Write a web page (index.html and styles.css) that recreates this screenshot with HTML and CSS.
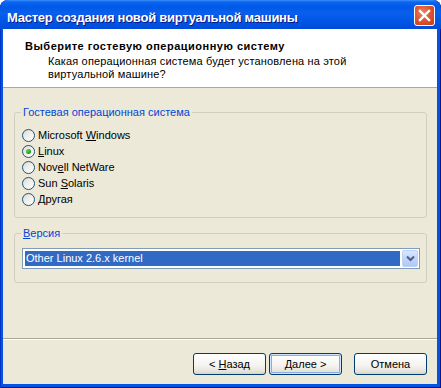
FILE: index.html
```html
<!DOCTYPE html>
<html lang="ru">
<head>
  <meta charset="UTF-8">
  <title>Мастер создания новой виртуальной машины</title>
  <link rel="stylesheet" href="styles.css">
</head>
<body>
  <div class="window">
    <!-- Title bar -->
    <div class="titlebar">
      <span class="title">Мастер создания новой виртуальной машины</span>
      <button class="close" title="Закрыть">
        <svg width="13" height="13" viewBox="0 0 13 13"><path d="M2 2 L11 11 M11 2 L2 11" stroke="#fff" stroke-width="2.4" stroke-linecap="square"/></svg>
      </button>
    </div>

    <div class="client">
      <!-- Wizard header -->
      <div class="header">
        <div class="header-title">Выберите гостевую операционную систему</div>
        <div class="header-sub">Какая операционная система будет установлена на этой<br>виртуальной машине?</div>
      </div>

      <div class="content">
        <fieldset class="group os-group">
          <legend>Гостевая операционная система</legend>
          <label class="radio-row"><span class="radio"></span><span>Microsoft <u>W</u>indows</span></label>
          <label class="radio-row"><span class="radio checked"></span><span><u>L</u>inux</span></label>
          <label class="radio-row"><span class="radio"></span><span>Nov<u>e</u>ll NetWare</span></label>
          <label class="radio-row"><span class="radio"></span><span>Sun <u>S</u>olaris</span></label>
          <label class="radio-row"><span class="radio"></span><span><u>Д</u>ругая</span></label>
        </fieldset>

        <fieldset class="group version-group">
          <legend><u>В</u>ерсия</legend>
          <div class="combo">
            <span class="combo-value">Other Linux 2.6.x kernel</span>
            <span class="combo-btn">
              <svg width="9" height="7" viewBox="0 0 9 7"><path d="M1 1.5 L4.5 5 L8 1.5" fill="none" stroke="#4D6185" stroke-width="2"/></svg>
            </span>
          </div>
        </fieldset>
      </div>

      <!-- Wizard buttons -->
      <div class="footer">
        <button class="btn">&lt; <u>Н</u>азад</button>
        <button class="btn default"><u>Д</u>алее &gt;</button>
        <button class="btn cancel">Отмена</button>
      </div>
    </div>
  </div>
</body>
</html>
```

FILE: styles.css
```css
/* --- Base --- */
*{box-sizing:border-box;margin:0;padding:0}
body{background:#fff;font-family:"Liberation Sans","DejaVu Sans",sans-serif;font-size:11px;color:#000}
u{text-decoration:underline;text-underline-offset:1px}

/* --- Window frame --- */
.window{width:441px;height:388px;display:flex;flex-direction:column;background:#0553E1;border-radius:8px 8px 0 0;overflow:hidden;box-shadow:inset 1px 0 #0034C4,inset -1px 0 #00138C,inset 0 -1px #00138C}
.titlebar{height:29px;flex:none;display:flex;align-items:flex-start;padding:0 6px 0 7px;background:linear-gradient(to bottom,#3D8FF9 0,#0A66F0 2px,#0058E8 7px,#0A60EC 13px,#0056E6 21px,#004BD8 29px);border-radius:8px 8px 0 0}
.title{flex:1;color:#fff;font-weight:700;font-size:13px;line-height:15px;margin-top:10px;letter-spacing:-.25px;text-shadow:1px 1px #0A1883;white-space:nowrap}
.close{width:21px;height:21px;margin-top:5px;border:1px solid #fff;border-radius:3px;background:radial-gradient(circle at 40% 35%,#E9866A 0,#DF5632 45%,#C33A18 100%);display:flex;align-items:center;justify-content:center;cursor:pointer}
.close svg{display:block}

/* --- Client area --- */
.client{flex:1;margin:0 4px 4px 3px;background:#ECE9D8;display:flex;flex-direction:column}
.header{height:59px;flex:none;background:#fff;border-bottom:1px solid #ACA899;padding:11px 0 0 22px}
.header-title{font-weight:700;line-height:13px;letter-spacing:.5px}
.header-sub{line-height:13px;margin:2px 0 0 23px;letter-spacing:.15px}

.content{flex:1;padding:18px 10px 0 11px}
.group{border:1px solid #D0D0BF;border-radius:3px;padding:8px 6px 10px 6px}
.group legend{color:#0046D5;padding:0 2px;line-height:13px}
.version-group{margin-top:9px;padding-bottom:13px}

/* --- Radios --- */
.radio-row{display:flex;align-items:center;height:16px;margin-left:1px;gap:3px;cursor:default}
.radio{position:relative;width:13px;height:13px;flex:none;border-radius:50%;border:1px solid #1C5180;background:linear-gradient(135deg,#DCDAD2 0,#F2F1EC 55%,#fff 100%)}
.radio.checked::after{content:"";position:absolute;left:3px;top:3px;width:5px;height:5px;border-radius:50%;background:radial-gradient(circle at 35% 35%,#5AD55A 0,#21A121 60%,#1A7F1A 100%)}

/* --- Combo box --- */
.combo{display:flex;height:21px;width:398px;margin-left:1px;border:1px solid #7F9DB9;background:#fff;padding:1px}
.combo-value{flex:1;margin:1px 2px 1px 1px;background:#316AC5;color:#fff;line-height:15px;padding-left:1px;white-space:nowrap}
.combo-btn{width:16px;flex:none;display:flex;align-items:center;justify-content:center;border:1px solid #BAD1FC;border-radius:2px;background:linear-gradient(to bottom,#DCE6FD 0,#C3D3FD 50%,#B3C7F7 100%)}
.combo-btn svg{display:block}

/* --- Footer buttons --- */
.footer{height:46px;flex:none;border-top:1px solid #ACA899;box-shadow:inset 0 1px #fff;display:flex;justify-content:flex-end;align-items:flex-start;padding:14px 10px 0 0;gap:3px}
.btn{width:73px;height:22px;border:1px solid #003C74;border-radius:3px;background:linear-gradient(to bottom,#fff 0,#F4F3EE 60%,#E3E0D6 90%,#D6D0C5 100%);font-family:inherit;font-size:11px;color:#000;cursor:pointer}
.btn.default{box-shadow:inset 0 0 0 1px #CEE7FF,inset 0 0 0 2px #8CAAE6}
.btn.cancel{margin-left:9px}
```
